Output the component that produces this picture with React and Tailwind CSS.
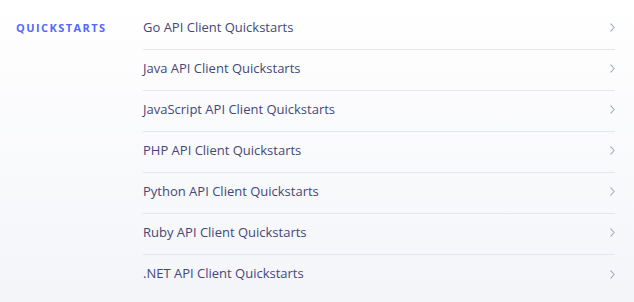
import React from "react";

const items = [
  "Go API Client Quickstarts",
  "Java API Client Quickstarts",
  "JavaScript API Client Quickstarts",
  "PHP API Client Quickstarts",
  "Python API Client Quickstarts",
  "Ruby API Client Quickstarts",
  ".NET API Client Quickstarts",
];

function Chevron() {
  return (
    <svg width="5" height="9" viewBox="0 0 5 9" fill="none" className="shrink-0">
      <path d="M0.8 0.8l3.4 3.7-3.4 3.7" stroke="#a3a6c9" strokeWidth="1.1" strokeLinecap="round" strokeLinejoin="round" />
    </svg>
  );
}

export default function App() {
  return (
    <div
      className="w-[634px] h-[302px] bg-gradient-to-b from-white to-[#f4f5f9] flex pt-[9px] pl-4 pr-[19px]"
      style={{ fontFamily: "'Open Sans', sans-serif" }}
    >
      <div className="w-[127px] shrink-0 h-[38px] flex items-center">
        <span className="text-[11px] font-bold tracking-[0.13em] text-[#5468ff]">QUICKSTARTS</span>
      </div>
      <ul className="flex-1">
        {items.map((t, i) => (
          <li
            key={t}
            className={`h-[41px] flex items-center justify-between pb-[3px] ${
              i < items.length - 1 ? "border-b border-[#e4e5ef]" : ""
            }`}
          >
            <span className="text-[13px] text-[#444879]">{t}</span>
            <Chevron />
          </li>
        ))}
      </ul>
    </div>
  );
}
